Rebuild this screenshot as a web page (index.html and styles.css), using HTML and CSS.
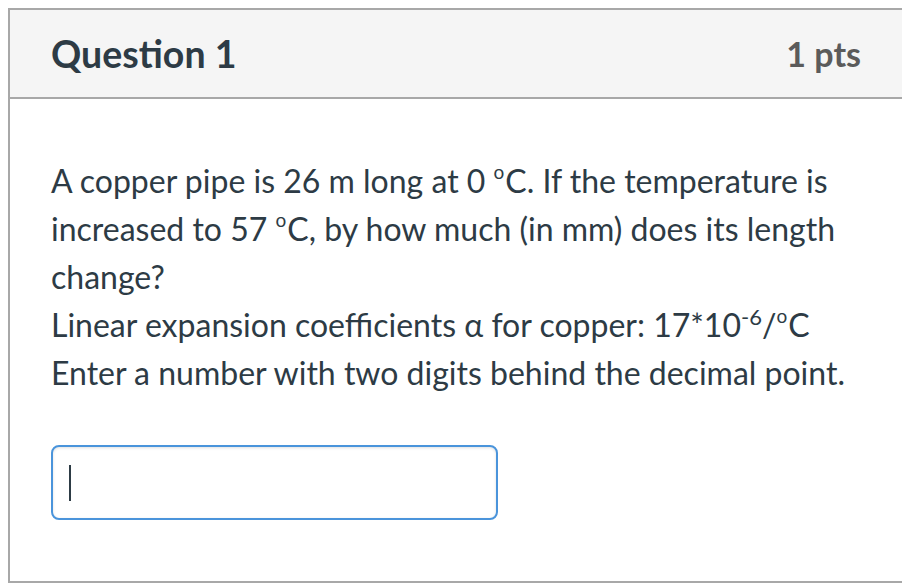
FILE: index.html
```html
<!DOCTYPE html>
<html lang="en">
<head>
<meta charset="utf-8">
<title>Question 1</title>
<link rel="stylesheet" href="styles.css">
</head>
<body>
<div class="card">
  <div class="card-header">
    <h2 class="title">Question 1</h2>
    <span class="points">1 pts</span>
  </div>
  <div class="card-body">
    <p class="text">A copper pipe is 26 m long at 0 <sup class="deg">o</sup>C. If the temperature is increased to 57 <sup class="deg">o</sup>C, by how much (in mm) does its length change?<br>Linear expansion coefficients α for copper: 17*10<sup class="sup">-6</sup>/<sup class="deg">o</sup>C<br>Enter a number with two digits behind the decimal point.</p>
    <div class="answer"><span class="caret"></span></div>
  </div>
</div>
</body>
</html>
```
FILE: styles.css
```css
html, body {
  margin: 0;
  padding: 0;
  overflow: hidden;
  background: #ffffff;
}
body {
  padding: 8px 0 0 8px;
  font-family: Lato, "Liberation Sans", sans-serif;
  color: #2d3b45;
}
.card {
  border: 2px solid #a8a8a8;
  border-right: none;
  width: 892px;
}
.card-header {
  display: flex;
  align-items: center;
  justify-content: space-between;
  height: 87px;
  padding: 0 41px;
  background: #f5f5f5;
  border-bottom: 2px solid #a8a8a8;
}
.title {
  margin: 0;
  font-size: 37.5px;
  font-weight: 700;
  color: #2d3b45;
}
.points {
  font-size: 34px;
  font-weight: 700;
  color: #5b5b5b;
}
.card-body {
  padding: 58px 41px 61px;
}
.text {
  margin: 0;
  font-size: 32px;
  line-height: 48px;
}
.sup {
  font-size: 22px;
  line-height: 0;
  vertical-align: super;
}
.deg {
  font-size: 19px;
  line-height: 0;
  vertical-align: 14px;
  padding-right: 1px;
}
.answer {
  margin-top: 48px;
  width: 427px;
  height: 71px;
  border: 2px solid #4a94db;
  border-radius: 8px;
  box-shadow: inset 0 1px 3px rgba(0,0,0,0.12);
  display: flex;
  align-items: center;
  padding-left: 16px;
  box-sizing: content-box;
}
.caret {
  width: 2px;
  height: 36px;
  background: #2d3b45;
}
```
